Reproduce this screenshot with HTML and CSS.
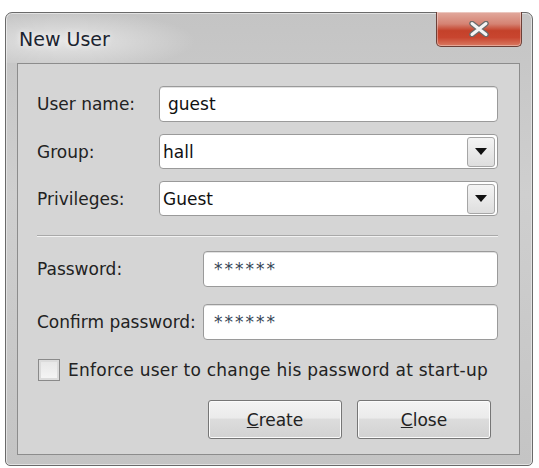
FILE: index.html
```html
<!DOCTYPE html>
<html lang="en">
<head>
    <meta charset="UTF-8">
    <meta name="viewport" content="width=device-width, initial-scale=1.0">
    <title>New User</title>
    <link rel="stylesheet" href="styles.css">
</head>
<body>
    <div class="window">
        <!-- Title bar -->
        <div class="titlebar">
            <span class="title">New User</span>
            <button class="close-x" type="button">
                <svg width="22" height="16" viewBox="0 0 22 16">
                    <path d="M4 2.5 L18 13.5 M18 2.5 L4 13.5" stroke="#6a6a6a" stroke-width="5.5" stroke-linecap="round"/>
                    <path d="M4 2.5 L18 13.5 M18 2.5 L4 13.5" stroke="#f4f4f4" stroke-width="3" stroke-linecap="round"/>
                </svg>
            </button>
        </div>

        <!-- Dialog body -->
        <div class="panel">
            <div class="fields">
                <div class="row">
                    <label class="lbl lbl-short" for="userName">User name:</label>
                    <input class="field" type="text" id="userName" value="guest">
                </div>
                <div class="row">
                    <span class="lbl lbl-short">Group:</span>
                    <div class="combo">
                        <span class="combo-value">hall</span>
                        <span class="combo-btn"><span class="tri"></span></span>
                    </div>
                </div>
                <div class="row">
                    <span class="lbl lbl-short">Privileges:</span>
                    <div class="combo">
                        <span class="combo-value">Guest</span>
                        <span class="combo-btn"><span class="tri"></span></span>
                    </div>
                </div>
            </div>

            <hr class="sep">

            <div class="fields fields-pwd">
                <div class="row">
                    <label class="lbl lbl-long" for="pwd">Password:</label>
                    <input class="field field-pwd" type="text" id="pwd" value="******">
                </div>
                <div class="row">
                    <label class="lbl lbl-long" for="pwd2">Confirm password:</label>
                    <input class="field field-pwd" type="text" id="pwd2" value="******">
                </div>
            </div>

            <div class="check-row">
                <span class="checkbox"></span>
                <span class="lbl check-lbl">Enforce user to change his password at start-up</span>
            </div>

            <div class="buttons">
                <button class="btn" type="button"><u>C</u>reate</button>
                <button class="btn" type="button"><u>C</u>lose</button>
            </div>
        </div>
    </div>
</body>
</html>
```

FILE: styles.css
```css
body {
    margin: 0;
    padding: 0;
    background: #ffffff;
    font-family: 'DejaVu Sans', sans-serif;
    color: #222;
}

.window {
    margin: 12px 0 0 5px;
    width: 526px;
    height: 452px;
    border: 1px solid #6a6a6a;
    border-radius: 7px 7px 5px 5px;
    background: linear-gradient(to bottom, #c4c4c4, #cfcfcf 40%, #c4c4c4);
    box-shadow: inset 0 0 0 1px #e2e2e2;
    display: flex;
    flex-direction: column;
}

.titlebar {
    height: 50px;
    display: flex;
    justify-content: space-between;
    align-items: flex-start;
    padding: 0 10px 0 13px;
    background: radial-gradient(ellipse 130px 30px at 60px 28px, rgba(255,255,255,0.55), rgba(255,255,255,0) 100%);
}

.title {
    margin-top: 15px;
    font-size: 19px;
    color: #1c2430;
    text-shadow: 0 0 6px #ffffff;
}

.close-x {
    width: 86px;
    height: 35px;
    padding: 0;
    margin-top: -1px;
    border: 1px solid #6d4038;
    border-top: none;
    border-radius: 0 0 5px 5px;
    background: linear-gradient(to bottom, #e2aa9e 0%, #d58373 35%, #c4412a 55%, #c8452f 75%, #d97a62 100%);
    box-shadow: inset 0 0 0 1px rgba(255,255,255,0.35);
    display: flex;
    align-items: center;
    justify-content: center;
}

.panel {
    flex: 1;
    margin: 0 12px 10px 11px;
    border: 1px solid #8c8c8c;
    background: #d5d5d5;
    padding: 22px 21px 0 19px;
    display: flex;
    flex-direction: column;
}

.fields {
    display: flex;
    flex-direction: column;
    gap: 12px;
}

.fields-pwd {
    gap: 17px;
}

.row {
    display: flex;
    align-items: center;
}

.lbl {
    font-size: 17px;
    color: #222;
}

.lbl-short {
    width: 122px;
}

.lbl-long {
    width: 166px;
}

.check-lbl {
    letter-spacing: 0.25px;
}

.field {
    flex: 1;
    min-width: 0;
    height: 36px;
    box-sizing: border-box;
    border: 1px solid #9a9a9a;
    border-radius: 4px;
    background: #fff;
    padding: 0 8px;
    font-family: 'DejaVu Sans', sans-serif;
    font-size: 17px;
    color: #111;
    box-shadow: inset 0 1px 0 #e2e2e2;
}

.field-pwd {
    padding-left: 10px;
    letter-spacing: 2px;
    color: #344454;
}

.combo {
    flex: 1;
    height: 35px;
    box-sizing: border-box;
    border: 1px solid #9a9a9a;
    border-radius: 4px;
    background: #fff;
    display: flex;
    align-items: center;
    justify-content: space-between;
    padding: 0 2px 0 3px;
}

.combo-value {
    font-size: 17px;
    color: #111;
}

.combo-btn {
    width: 28px;
    height: 30px;
    box-sizing: border-box;
    border: 1px solid #a6a6a6;
    border-radius: 3px;
    background: linear-gradient(to bottom, #f4f4f4, #dedede);
    display: flex;
    align-items: center;
    justify-content: center;
}

.tri {
    width: 0;
    height: 0;
    border-left: 6px solid transparent;
    border-right: 6px solid transparent;
    border-top: 7px solid #111;
}

.sep {
    width: 100%;
    margin: 19px 0 14px 0;
    border: none;
    border-top: 1px solid #a9a9a9;
    border-bottom: 1px solid #f2f2f2;
}

.check-row {
    display: flex;
    align-items: center;
    gap: 8px;
    margin: 19px 0 0 1px;
}

.checkbox {
    width: 22px;
    height: 22px;
    box-sizing: border-box;
    border: 1px solid #8a8a8a;
    background: linear-gradient(to bottom, #e6e6e6, #f6f6f6);
    box-shadow: inset 0 0 0 2px #dcdcdc;
}

.buttons {
    display: flex;
    justify-content: flex-end;
    gap: 15px;
    margin-top: 19px;
    padding-right: 7px;
}

.btn {
    width: 134px;
    height: 39px;
    border: 1px solid #767676;
    border-radius: 3px;
    background: linear-gradient(to bottom, #f3f3f3 0%, #ebebeb 45%, #dcdcdc 50%, #d2d2d2 100%);
    box-shadow: inset 0 0 0 1px #fbfbfb;
    font-family: 'DejaVu Sans', sans-serif;
    font-size: 17px;
    color: #222;
}
```
